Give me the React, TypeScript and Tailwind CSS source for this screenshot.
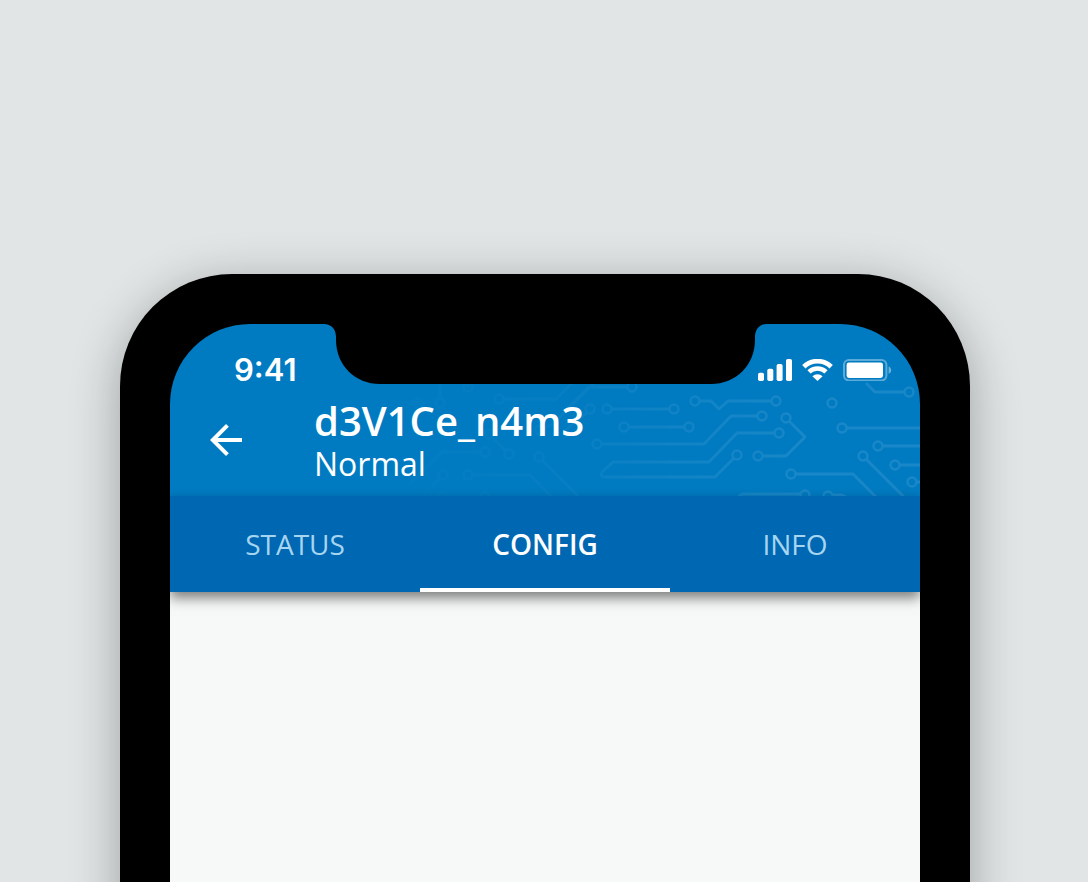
import { useState } from "react";

const traces = [
  "M239 79H256 M270 60V75 M298 60V63",
  "M333 75H386L404 57",
  "M374 104L383 100L426 57",
  "M394 107L417 89",
  "M311 128H272L240 160",
  "M336 127L322 113",
  "M372 136L408 172",
  "M302 151H360L381 172",
  "M270 154L252 172",
  "M458 63H419L395 87",
  "M441 85H500",
  "M458 103H515",
  "M529 77H541L549 85L558 77H602",
  "M431 120H534L561 92H588",
  "M605 109H567L539 138H443L432 148Q430 153 434 153H545L564 134",
  "M592 132H616L635 113L619 97",
  "M566 175L572 170H631",
  "M662 171H672L680 175",
  "M625 150H683L706 173",
  "M696 135L734 173",
  "M676 104H760",
  "M712 122H760",
  "M729 141H760",
  "M746 158H760",
  "M735 68H705L696 59",
];

const nodes: [number, number][] = [
  [248, 79], [270, 79], [298, 63], [329, 75], [370, 106], [315, 128],
  [339, 130], [319, 110], [369, 133], [298, 151], [273, 151], [272, 173],
  [315, 173], [462, 63], [420, 85], [437, 85], [504, 85], [454, 103],
  [519, 103], [525, 77], [606, 77], [427, 120], [592, 92], [609, 109],
  [567, 131], [588, 132], [616, 94], [635, 171], [658, 172], [621, 150],
  [693, 132], [662, 79], [672, 104], [708, 122], [725, 141], [742, 158],
  [739, 68],
];

function CircuitPattern() {
  return (
    <svg
      className="absolute right-0 top-0 h-[172px] w-[750px]"
      viewBox="0 0 750 172"
      fill="none"
      aria-hidden="true"
    >
      <defs>
        <linearGradient id="trace-fade" gradientUnits="userSpaceOnUse" x1="230" y1="0" x2="640" y2="0">
          <stop offset="0" stopColor="#fff" stopOpacity="0.01" />
          <stop offset="0.4" stopColor="#fff" stopOpacity="0.03" />
          <stop offset="0.6" stopColor="#fff" stopOpacity="0.06" />
          <stop offset="1" stopColor="#fff" stopOpacity="0.1" />
        </linearGradient>
        <mask id="trace-mask" maskUnits="userSpaceOnUse" x="0" y="0" width="750" height="172">
          <rect width="750" height="172" fill="url(#trace-fade)" />
        </mask>
      </defs>
      <g mask="url(#trace-mask)" stroke="#fff">
        <path d={traces.join(" ")} strokeWidth="2.8" strokeLinejoin="round" />
        {nodes.map(([x, y]) => (
          <circle key={`${x}-${y}`} cx={x} cy={y} r="4.5" strokeWidth="2.4" />
        ))}
      </g>
    </svg>
  );
}

function Notch() {
  return (
    <svg
      className="absolute left-1/2 top-0 h-[60px] w-[448px] -translate-x-1/2"
      viewBox="0 0 448 60"
      aria-hidden="true"
    >
      <path
        d="M0 0H3C10 0 15 5 15 13V16C15 41 34 60 59 60H390C415 60 434 41 434 16V13C434 5 439 0 446 0H448Z"
        fill="#000"
      />
    </svg>
  );
}

function SignalIcon() {
  return (
    <svg className="h-[22px] w-[34px]" viewBox="0 0 34 22" fill="#fff" aria-hidden="true">
      <rect x="0" y="13.7" width="6" height="8.3" rx="1.8" />
      <rect x="9.3" y="9.7" width="6" height="12.3" rx="1.8" />
      <rect x="18.6" y="5" width="6" height="17" rx="1.8" />
      <rect x="28" y="0" width="6" height="22" rx="1.8" />
    </svg>
  );
}

function WifiIcon() {
  return (
    <svg className="h-[22px] w-[31px]" viewBox="0 0 31 22" fill="none" aria-hidden="true">
      <path d="M1.8 7.7a19.6 19.6 0 0 1 27.4 0" stroke="#fff" strokeWidth="4.7" />
      <path d="M7 12.9a12.2 12.2 0 0 1 17 0" stroke="#fff" strokeWidth="4.5" />
      <path d="M10.4 17.2a7.6 7.6 0 0 1 10.2 0L15.5 22Z" fill="#fff" />
    </svg>
  );
}

function BatteryIcon() {
  return (
    <svg className="h-[22px] w-[49px]" viewBox="0 0 49 22" fill="none" aria-hidden="true">
      <rect x="1" y="1" width="42.4" height="20.4" rx="4.8" stroke="#fff" strokeWidth="2" opacity="0.36" />
      <rect x="3.6" y="3.5" width="36.4" height="15.4" rx="2.4" fill="#fff" />
      <path d="M45.6 7.6v7.2c1.6-.6 2.6-2 2.6-3.6s-1-3-2.6-3.6Z" fill="#fff" opacity="0.42" />
    </svg>
  );
}

function StatusBar() {
  return (
    <div className="relative flex h-[60px] items-center justify-between pl-16 pr-7 pt-8">
      <span className="font-['Inter',sans-serif] text-[31px] font-semibold leading-7">9:41</span>
      <div className="flex items-center gap-[10px]">
        <SignalIcon />
        <WifiIcon />
        <BatteryIcon />
      </div>
    </div>
  );
}

function AppBar() {
  return (
    <div className="relative flex h-28 items-center gap-16 px-8">
      <button type="button" aria-label="Back" className="shrink-0">
        <svg className="size-12" viewBox="0 0 24 24" fill="#fff" aria-hidden="true">
          <path d="M20 11H7.83l5.59-5.59L12 4l-8 8 8 8 1.41-1.41L7.83 13H20v-2z" />
        </svg>
      </button>
      <div className="pt-0.5">
        <h1 className="text-[40px] font-semibold leading-[46px]">d3V1Ce_n4m3</h1>
        <p className="text-[32px] leading-10">Normal</p>
      </div>
    </div>
  );
}

const tabs = ["STATUS", "CONFIG", "INFO"];

export default function App() {
  const [active, setActive] = useState("CONFIG");

  return (
    <main className="flex h-screen flex-col overflow-hidden bg-[#e1e5e6] pl-30 pr-[118px] pt-[274px] font-['Open_Sans',sans-serif] text-white">
      <div className="-mb-24 flex flex-1 flex-col rounded-t-[112px] bg-black px-[50px] pt-[50px] shadow-[0_10px_50px_rgba(0,0,0,0.3)]">
        <div className="relative flex flex-1 flex-col overflow-hidden rounded-t-[80px]">
          <header className="relative bg-[#007bc2]">
            <CircuitPattern />
            <StatusBar />
            <AppBar />
          </header>
          <nav
            role="tablist"
            aria-label="Device sections"
            className="relative z-10 grid h-24 grid-cols-3 bg-[#0067b3] shadow-[0_6px_12px_rgba(0,0,0,0.5)]"
          >
            {tabs.map((tab) => (
              <button
                key={tab}
                type="button"
                role="tab"
                aria-selected={active === tab}
                onClick={() => setActive(tab)}
                className={
                  active === tab
                    ? "border-b-4 border-white pt-1 text-[28px] font-semibold leading-10 text-white"
                    : "border-b-4 border-transparent pt-1 text-[28px] leading-10 text-[#a6d5f0]"
                }
              >
                {tab}
              </button>
            ))}
          </nav>
          <section className="flex-1 bg-[#f7f9f9]" aria-label="Section content" />
          <Notch />
        </div>
      </div>
    </main>
  );
}
